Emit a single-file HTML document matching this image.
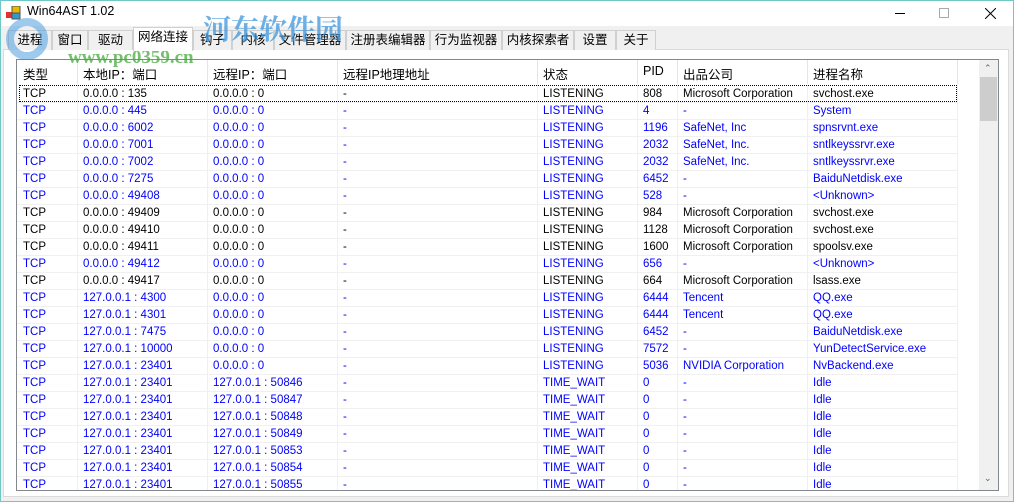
<!DOCTYPE html>
<html><head><meta charset="utf-8"><style>
*{margin:0;padding:0;box-sizing:border-box}
body{width:1014px;height:502px;overflow:hidden;background:#f0f0f0;font-family:"Liberation Sans","Noto Sans CJK SC",sans-serif;font-size:12px;position:relative}
.win{position:absolute;left:0;top:0;width:1014px;height:502px;border:1px solid #6fc8c8}
.title{position:absolute;left:1px;top:1px;width:1012px;height:25px;background:#fff}
.tab{position:absolute;top:30px;height:20px;border:1px solid #d0d0d0;border-bottom:none;background:#f0f0f0;text-align:center;line-height:19px;font-size:12.5px}
.panel{position:absolute;left:3px;top:49px;width:1006px;height:448px;background:#fff;border:1px solid #dadada}
.lv{position:absolute;left:16px;top:59px;width:983px;height:432px;border:1px solid #828790;background:#fff;overflow:hidden}
.hdr{position:absolute;left:0;top:0;height:24px;width:962px}
.c{position:absolute;white-space:nowrap;font-size:11.5px}
.vl{position:absolute;top:0;width:1px;background:#e5e5e5;height:24px}
.rl{position:absolute;left:0;width:940px;height:1px;background:#f0f0f0}
.sb{position:absolute;left:962px;top:0;width:19px;height:430px;background:#f0f0f0}
</style></head><body>
<div class="win"></div>
<div class="title">
<svg style="position:absolute;left:5px;top:5px" width="16" height="14"><rect x="0" y="6" width="6" height="6" fill="#d33"/><rect x="6" y="0" width="8" height="7" fill="#e8b800" stroke="#555" stroke-width="1"/><rect x="6" y="7" width="8" height="6" fill="#39c" stroke="#555" stroke-width="1"/></svg>
<div style="position:absolute;left:26px;top:3px;font-size:12.5px">Win64AST 1.02</div>
<div style="position:absolute;left:894px;top:12px;width:10px;height:1px;background:#000"></div>
<div style="position:absolute;left:938px;top:7px;width:10px;height:10px;border:1px solid #aaa"></div>
<svg style="position:absolute;left:984px;top:7px" width="11" height="11"><path d="M0 0L11 11M11 0L0 11" stroke="#000" stroke-width="1"/></svg>
</div>
<div class="panel"></div>
<div class="tab" style="left:8px;width:44px">进程</div>
<div class="tab" style="left:52px;width:36px">窗口</div>
<div class="tab" style="left:88px;width:45px">驱动</div>
<div class="tab" style="left:133px;width:60px;top:27px;height:24px;background:#fff;z-index:2">网络连接</div>
<div class="tab" style="left:193px;width:39px">钩子</div>
<div class="tab" style="left:232px;width:42px">内核</div>
<div class="tab" style="left:274px;width:72px">文件管理器</div>
<div class="tab" style="left:346px;width:84px">注册表编辑器</div>
<div class="tab" style="left:430px;width:72px">行为监视器</div>
<div class="tab" style="left:502px;width:72px">内核探索者</div>
<div class="tab" style="left:574px;width:42px">设置</div>
<div class="tab" style="left:616px;width:40px">关于</div>
<div class="lv" id="lv">
<div class="hdr">
<div class="c" style="left:6px;top:4px;font-size:12.5px">类型</div>
<div class="c" style="left:66px;top:4px;font-size:12.5px">本地IP：端口</div>
<div class="c" style="left:196px;top:4px;font-size:12.5px">远程IP：端口</div>
<div class="c" style="left:326px;top:4px;font-size:12.5px">远程IP地理地址</div>
<div class="c" style="left:526px;top:4px;font-size:12.5px">状态</div>
<div class="c" style="left:626px;top:4px;font-size:12.5px">PID</div>
<div class="c" style="left:666px;top:4px;font-size:12.5px">出品公司</div>
<div class="c" style="left:796px;top:4px;font-size:12.5px">进程名称</div>
<div class="vl" style="left:60px"></div><div class="vl" style="left:190px"></div><div class="vl" style="left:320px"></div><div class="vl" style="left:520px"></div><div class="vl" style="left:620px"></div><div class="vl" style="left:660px"></div><div class="vl" style="left:790px"></div><div class="vl" style="left:940px"></div>
</div>
<div id="rows"></div>
<div style="position:absolute;left:2px;top:25px;width:938px;height:17px;border:1px dotted #000"></div>
<div class="sb"><div style="position:absolute;left:1px;top:17px;width:17px;height:44px;background:#cdcdcd"></div>
<div style="position:absolute;left:5px;top:3px;font-size:9px;color:#606060">&#8963;</div>
<div style="position:absolute;left:5px;top:413px;font-size:9px;color:#606060">&#8964;</div></div>
</div>
<div style="position:absolute;left:203px;top:11px;font-size:28px;font-weight:bold;color:rgba(60,150,220,0.75);font-family:'Noto Serif CJK SC',serif;line-height:34px">河东软件园</div>
<div style="position:absolute;left:68px;top:47px;font-size:19px;font-weight:bold;color:rgba(70,170,60,0.75);font-family:'Liberation Serif',serif">www.pc0359.cn</div>
<div style="position:absolute;left:6px;top:18px;width:42px;height:42px;border-radius:50%;border:8px solid rgba(60,150,220,0.5)"></div>
<script>
var d=[
[0,"0.0.0.0 : 135","0.0.0.0 : 0","808","Microsoft Corporation","svchost.exe","LISTENING"],
[1,"0.0.0.0 : 445","0.0.0.0 : 0","4","-","System","LISTENING"],
[1,"0.0.0.0 : 6002","0.0.0.0 : 0","1196","SafeNet, Inc","spnsrvnt.exe","LISTENING"],
[1,"0.0.0.0 : 7001","0.0.0.0 : 0","2032","SafeNet, Inc.","sntlkeyssrvr.exe","LISTENING"],
[1,"0.0.0.0 : 7002","0.0.0.0 : 0","2032","SafeNet, Inc.","sntlkeyssrvr.exe","LISTENING"],
[1,"0.0.0.0 : 7275","0.0.0.0 : 0","6452","-","BaiduNetdisk.exe","LISTENING"],
[1,"0.0.0.0 : 49408","0.0.0.0 : 0","528","-","&lt;Unknown&gt;","LISTENING"],
[0,"0.0.0.0 : 49409","0.0.0.0 : 0","984","Microsoft Corporation","svchost.exe","LISTENING"],
[0,"0.0.0.0 : 49410","0.0.0.0 : 0","1128","Microsoft Corporation","svchost.exe","LISTENING"],
[0,"0.0.0.0 : 49411","0.0.0.0 : 0","1600","Microsoft Corporation","spoolsv.exe","LISTENING"],
[1,"0.0.0.0 : 49412","0.0.0.0 : 0","656","-","&lt;Unknown&gt;","LISTENING"],
[0,"0.0.0.0 : 49417","0.0.0.0 : 0","664","Microsoft Corporation","lsass.exe","LISTENING"],
[1,"127.0.0.1 : 4300","0.0.0.0 : 0","6444","Tencent","QQ.exe","LISTENING"],
[1,"127.0.0.1 : 4301","0.0.0.0 : 0","6444","Tencent","QQ.exe","LISTENING"],
[1,"127.0.0.1 : 7475","0.0.0.0 : 0","6452","-","BaiduNetdisk.exe","LISTENING"],
[1,"127.0.0.1 : 10000","0.0.0.0 : 0","7572","-","YunDetectService.exe","LISTENING"],
[1,"127.0.0.1 : 23401","0.0.0.0 : 0","5036","NVIDIA Corporation","NvBackend.exe","LISTENING"],
[1,"127.0.0.1 : 23401","127.0.0.1 : 50846","0","-","Idle","TIME_WAIT"],
[1,"127.0.0.1 : 23401","127.0.0.1 : 50847","0","-","Idle","TIME_WAIT"],
[1,"127.0.0.1 : 23401","127.0.0.1 : 50848","0","-","Idle","TIME_WAIT"],
[1,"127.0.0.1 : 23401","127.0.0.1 : 50849","0","-","Idle","TIME_WAIT"],
[1,"127.0.0.1 : 23401","127.0.0.1 : 50853","0","-","Idle","TIME_WAIT"],
[1,"127.0.0.1 : 23401","127.0.0.1 : 50854","0","-","Idle","TIME_WAIT"],
[1,"127.0.0.1 : 23401","127.0.0.1 : 50855","0","-","Idle","TIME_WAIT"]];
var h="";
d.forEach(function(r,i){var y=25+i*17,col=r[0]?"#0000ff":"#000";
var xs=[[6,"TCP"],[66,r[1]],[196,r[2]],[326,"-"],[526,r[6]],[626,r[3]],[666,r[4]],[796,r[5]]];
xs.forEach(function(x){h+='<div class="c" style="left:'+x[0]+'px;top:'+(y+3)+'px;color:'+col+'">'+x[1]+'</div>';});
h+='<div class="rl" style="top:'+(y+17)+'px"></div>';
[60,190,320,520,620,660,790,940].forEach(function(x){h+='<div style="position:absolute;left:'+x+'px;top:'+y+'px;width:1px;height:17px;background:#f0f0f0"></div>';});
});
document.getElementById("rows").innerHTML=h;
</script>
</body></html>
